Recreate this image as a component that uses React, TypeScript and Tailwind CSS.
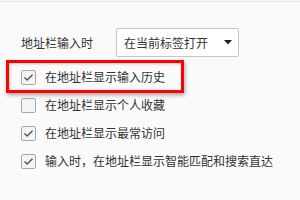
const items = [
  { label: "在地址栏显示输入历史", checked: true },
  { label: "在地址栏显示个人收藏", checked: false },
  { label: "在地址栏显示最常访问", checked: true },
  { label: "输入时，在地址栏显示智能匹配和搜索直达", checked: true },
];

function Checkbox({ checked }: { checked: boolean }) {
  return (
    <div className="w-[15px] h-[15px] shrink-0 rounded-[2px] border border-[#a8a8a8] bg-[#f4f4f4] flex items-center justify-center">
      {checked && (
        <svg width="11" height="9" viewBox="0 0 11 9" fill="none">
          <path d="M1.5 4.5 L4.2 7 L9.5 1.8" stroke="#555" strokeWidth="1.5" />
        </svg>
      )}
    </div>
  );
}

export default function App() {
  return (
    <div
      className="relative w-[300px] h-[200px] overflow-hidden bg-[#fafafa] text-[12px] text-[#333]"
      style={{ fontFamily: '"Noto Sans CJK SC", "Noto Sans", sans-serif' }}
    >
      <div className="mt-px h-px bg-[#e6e6e6]" />

      <div className="mt-[26px] pl-[21px] flex items-center">
        <span className="w-[95px] leading-none">地址栏输入时</span>
        <div className="w-[123px] h-[29px] rounded-[2px] border border-[#c6c6c6] bg-white flex items-center justify-between pl-[7px] pr-[6px]">
          <span className="leading-none">在当前标签打开</span>
          <svg width="8" height="5" viewBox="0 0 8 5">
            <path d="M0 0 H8 L4 4.5 Z" fill="#222" />
          </svg>
        </div>
      </div>

      <div className="mt-[6px] flex flex-col">
        {items.map((it) => (
          <div key={it.label} className="h-[28px] pl-[21px] flex items-center gap-[9px]">
            <Checkbox checked={it.checked} />
            <span className="leading-none">{it.label}</span>
          </div>
        ))}
      </div>

      <div className="absolute left-[6px] top-[60px] w-[178px] h-[33px] border-[3px] border-[#ff0000] shadow-[1px_2px_4px_rgba(0,0,0,0.35),inset_1px_1px_3px_rgba(0,0,0,0.2)] pointer-events-none" />
    </div>
  );
}
